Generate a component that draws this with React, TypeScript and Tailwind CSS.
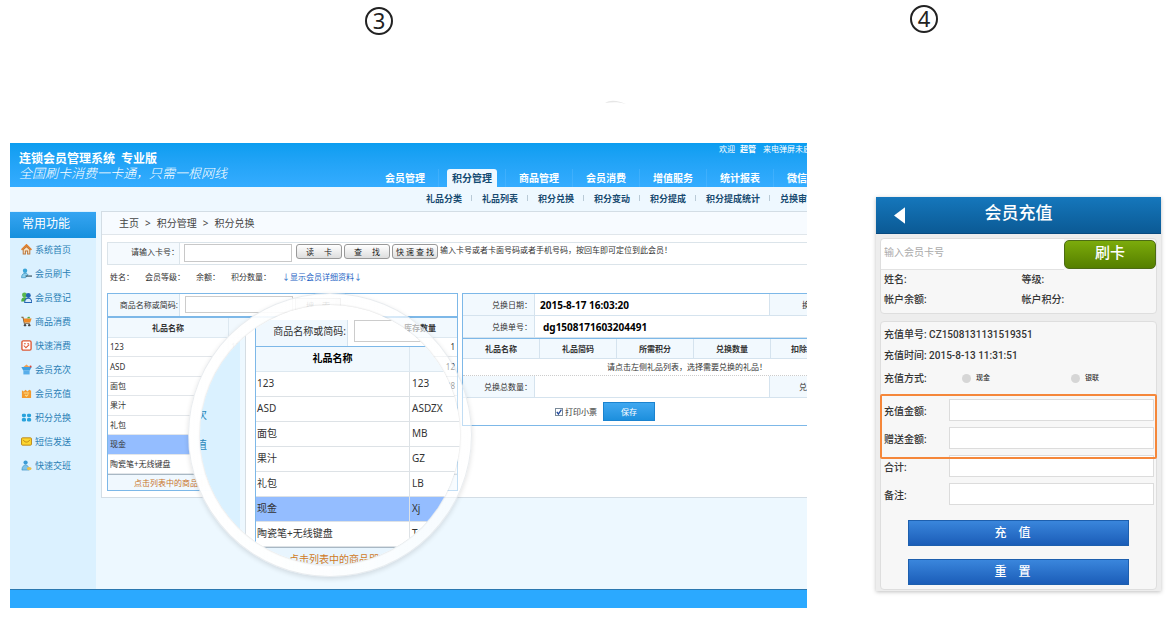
import React from "react";

type SideItem = { label: string; icon: React.ReactNode };

const Svg = ({ children }: { children: React.ReactNode }) => (
  <svg viewBox="0 0 12 12" className="h-[11px] w-[11px] shrink-0" aria-hidden="true">
    {children}
  </svg>
);

const sideItems: SideItem[] = [
  {
    label: "系统首页",
    icon: (
      <Svg>
        <path d="M2.4 6.2 6 2.8l3.6 3.4V11H7.2V7.6H4.8V11H2.4z" fill="#fbe3c0" stroke="#b9773f" strokeWidth="1.1" />
        <path d="M0.6 6.4 6 1l5.4 5.4" fill="none" stroke="#e07f2c" strokeWidth="1.8" />
      </Svg>
    ),
  },
  {
    label: "会员刷卡",
    icon: (
      <Svg>
        <circle cx="4.4" cy="3" r="2.4" fill="#3aa5d8" />
        <path d="M0.6 10.6c0-3.6 2-4.8 4-4.8 1.6 0 2.4.6 3 1.6L5 10.6z" fill="#8ed0ee" stroke="#2b86b8" strokeWidth="0.7" />
        <path d="M5 8.8h7" stroke="#37525f" strokeWidth="1.3" />
      </Svg>
    ),
  },
  {
    label: "会员登记",
    icon: (
      <Svg>
        <circle cx="3.8" cy="3.2" r="2.7" fill="#59b84e" />
        <path d="M0.2 10.4c0-3.2 1.4-4.6 3.8-4.6S7 7 7 10.4z" fill="#4fae45" />
        <circle cx="8" cy="3.8" r="2.7" fill="#2465b5" />
        <path d="M4 11.4c0-3 1.6-4.6 4-4.6s3.8 1.6 3.8 4.6z" fill="#d7ebfb" stroke="#2465b5" strokeWidth="1.1" />
      </Svg>
    ),
  },
  {
    label: "商品消费",
    icon: (
      <Svg>
        <path d="M0.4 1.4h1.8l1.4 6.4h6" fill="none" stroke="#7a5a34" strokeWidth="1.1" />
        <path d="M2.6 2.6h9L10 7H3.6z" fill="#f08a24" />
        <path d="M6 2.4 8.8.6l1.4 1.8z" fill="#4aa53a" />
        <circle cx="4.4" cy="10" r="1.3" fill="#444" />
        <circle cx="9" cy="10" r="1.3" fill="#444" />
      </Svg>
    ),
  },
  {
    label: "快速消费",
    icon: (
      <Svg>
        <rect x="1" y="1" width="10" height="10" rx="1.4" fill="#fff" stroke="#de5a36" strokeWidth="1.5" />
        <path d="M3.2 4h2M6.8 4h2M3 6l2.4 2.4L9 5" fill="none" stroke="#de5a36" strokeWidth="1.1" />
      </Svg>
    ),
  },
  {
    label: "会员充次",
    icon: (
      <Svg>
        <path d="M2.6 3.2 6 .6l3.4 2.6z" fill="#f0a050" />
        <path d="M.4 3.4h11.2L9.6 7H2.4z" fill="#3f9fe0" />
        <path d="M2.6 7h6.8v4.4H2.6z" fill="#58aeea" />
        <circle cx="10.4" cy="2.8" r="1.2" fill="#d9483b" />
      </Svg>
    ),
  },
  {
    label: "会员充值",
    icon: (
      <Svg>
        <path d="M1 2.4 3 3.8 5 2l2 1.8L9 2l2 1v8H1z" fill="#f29a2e" />
        <path d="M3 5.4h6M4.4 7.6 6 9l2-2" fill="none" stroke="#fbe08c" strokeWidth="1.1" />
      </Svg>
    ),
  },
  {
    label: "积分兑换",
    icon: (
      <Svg>
        <rect x="1" y="1.8" width="4.4" height="3.8" rx="1.4" fill="#29a3dc" />
        <rect x="6.6" y="1.8" width="4.4" height="3.8" rx="1.4" fill="#29a3dc" />
        <rect x="1" y="6.6" width="4.4" height="3.8" rx="1.4" fill="#29a3dc" />
        <rect x="6.6" y="6.6" width="4.4" height="3.8" rx="1.4" fill="#29a3dc" />
      </Svg>
    ),
  },
  {
    label: "短信发送",
    icon: (
      <Svg>
        <rect x="0.6" y="2" width="10.8" height="8" rx="1" fill="#fcd630" stroke="#b98212" strokeWidth="1" />
        <path d="M2.4 4.2C4 7.4 8 7.4 9.6 4.2" fill="none" stroke="#b98212" strokeWidth="1" />
      </Svg>
    ),
  },
  {
    label: "快速交班",
    icon: (
      <Svg>
        <circle cx="5" cy="2.8" r="2.3" fill="#3a9bd6" />
        <path d="M1 11c0-3.8 1.6-5.4 4-5.4S8.8 7.2 8.8 11z" fill="#7fc4ea" stroke="#2b86b8" strokeWidth="0.6" />
        <ellipse cx="9" cy="9.4" rx="2.6" ry="1.8" fill="#ecc04a" />
      </Svg>
    ),
  },
];

const navItems = ["会员管理", "积分管理", "商品管理", "会员消费", "增值服务", "统计报表"];
const subItems = ["礼品分类", "礼品列表", "积分兑换", "积分变动", "积分提成", "积分提成统计", "兑换审"];

const gifts = [
  { name: "123", code: "123", stock: "1" },
  { name: "ASD", code: "ASDZX", stock: "12" },
  { name: "面包", code: "MB", stock: "98" },
  { name: "果汁", code: "GZ", stock: "1" },
  { name: "礼包", code: "LB", stock: "" },
  { name: "现金", code: "Xj", stock: "" },
  { name: "陶瓷笔+无线键盘", code: "T", stock: "" },
];

function StepNumber({ n }: { n: string }) {
  return (
    <div className="flex h-7 w-7 items-center justify-center rounded-full border-2 border-[#222] pb-[3px] text-[22px] leading-none text-[#222]">
      {n}
    </div>
  );
}

function GreyButton({ children }: { children: React.ReactNode }) {
  return (
    <button className="h-[15px] w-[46px] rounded-[3px] border border-[#999] bg-linear-to-b from-white to-[#dedede] text-[8px] leading-none whitespace-pre text-[#222]">
      {children}
    </button>
  );
}

function GiftTable() {
  return (
    <div className="w-[351px] shrink-0 border border-[#7db8e8]">
      <div className="flex h-[22px] items-stretch">
        <label htmlFor="giftSearch" className="flex w-[72px] items-center justify-end border-r border-[#d5e3ee] bg-[#f2f9fe] pr-px">
          商品名称或简码:
        </label>
        <input id="giftSearch" className="mt-[2px] ml-[5px] h-[17px] w-[108px] border border-[#ccc] bg-white px-1" />
        <button className="mt-1 ml-[2px] h-[15px] w-[46px] border border-[#bbb] bg-[#f4f4f4] whitespace-pre">搜　索</button>
      </div>
      <table className="h-[158px] w-full table-fixed border-separate border-spacing-0 border-t-2 border-[#7db8e8]">
        <thead>
          <tr className="h-5 bg-[#f2f9fe]">
            <th className="w-[121px] border-r border-b border-[#dde8f0] p-0">礼品名称</th>
            <th className="w-[102px] border-r border-b border-[#dde8f0] p-0">礼品简码</th>
            <th className="w-[52px] border-b border-[#dde8f0] p-0">积分</th>
            <th className="border-b border-[#dde8f0] p-0">库存数量</th>
          </tr>
        </thead>
        <tbody>
          {gifts.map((g) => (
            <tr key={g.name} className={g.name === "现金" ? "h-[19px] bg-[#94bdff]" : "h-[19px] bg-white"}>
              <td className="border-r border-b border-[#e2e6ea] p-0 pl-[2px]">{g.name}</td>
              <td className="border-r border-b border-[#e2e6ea] p-0 pl-[2px]">{g.code}</td>
              <td className="border-b border-[#e2e6ea] p-0" />
              <td className="border-b border-[#e2e6ea] p-0 pr-[2px] text-right">{g.stock}</td>
            </tr>
          ))}
        </tbody>
      </table>
      <div className="flex h-4 items-center border-t border-[#a9b8c4] bg-[#f0f8fe] pl-[26px] text-[#c8742a]">
        点击列表中的商品即可
      </div>
    </div>
  );
}

function ExchangeForm() {
  const label = "border-r border-b border-[#d5e3ee] bg-[#f2f9fe] p-0 pr-[2px] text-right";
  return (
    <div className="w-[400px] shrink-0 border border-[#7db8e8]">
      <table className="w-full table-fixed border-separate border-spacing-0">
        <tbody>
          <tr className="h-[22px]">
            <td className={`${label} w-[72px]`}>兑换日期：</td>
            <td className="w-[235px] border-r border-b border-[#d5e3ee] p-0 pl-[5px] text-[10px] font-bold text-black">2015-8-17 16:03:20</td>
            <td className="border-b border-[#d5e3ee] bg-[#f2f9fe] p-0 pl-8">换</td>
          </tr>
          <tr className="h-[22px]">
            <td className={label}>兑换单号：</td>
            <td className="border-b border-[#d5e3ee] p-0 pl-2 text-[10px] font-bold text-black" colSpan={2}>
              dg1508171603204491
            </td>
          </tr>
        </tbody>
      </table>
      <table className="w-full table-fixed border-separate border-spacing-0 border-t border-[#7db8e8]">
        <thead>
          <tr className="h-5 bg-[#f2f9fe]">
            {["礼品名称", "礼品简码", "所需积分", "兑换数量"].map((h) => (
              <th key={h} className="w-[77px] border-r border-b border-[#d5e3ee] p-0">
                {h}
              </th>
            ))}
            <th className="border-b border-[#d5e3ee] p-0 pl-5 text-left">扣除</th>
          </tr>
        </thead>
        <tbody>
          <tr className="h-[17px]">
            <td colSpan={5} className="border-b border-dotted border-[#ccc] p-0 pl-[144px]">
              请点击左侧礼品列表，选择需要兑换的礼品！
            </td>
          </tr>
        </tbody>
      </table>
      <table className="w-full table-fixed border-separate border-spacing-0">
        <tbody>
          <tr className="h-[22px]">
            <td className={`${label} w-[72px]`}>兑换总数量：</td>
            <td className="w-[235px] border-r border-b border-[#d5e3ee] p-0" />
            <td className="border-b border-[#d5e3ee] bg-[#f2f9fe] p-0 pl-[29px]">兑</td>
          </tr>
        </tbody>
      </table>
      <div className="flex h-[27px] items-center pl-[92px]">
        <span className="relative flex h-2 w-2">
          <input id="printTicket" type="checkbox" defaultChecked className="peer h-2 w-2 appearance-none border border-[#7a8a99] bg-white" />
          <svg viewBox="0 0 8 8" className="pointer-events-none absolute inset-0 hidden h-2 w-2 peer-checked:block">
            <path d="M1.8 3.8 3.4 6 6.4 1.6" fill="none" stroke="#234a9c" strokeWidth="1.3" />
          </svg>
        </span>
        <label htmlFor="printTicket" className="ml-[2px] w-[38px]">
          打印小票
        </label>
        <button className="h-[19px] w-[52px] border border-[#1b83cf] bg-linear-to-b from-[#3fa8f0] to-[#1c8fdd] text-white">保存</button>
      </div>
    </div>
  );
}

function Magnifier() {
  return (
    <div
      aria-hidden="true"
      className="absolute top-[150px] left-[178px] h-[284px] w-[284px] rounded-full border border-[#dfe4e8]/70 bg-linear-to-r from-white via-white/85 to-white/50 p-[11px] shadow-[0_2px_5px_rgba(0,0,0,0.12)]"
    >
      <div className="flex h-full w-full overflow-hidden rounded-full bg-white text-[10px] leading-none text-[#333] shadow-[0_0_2px_rgba(0,0,0,0.2)]">
        <div className="flex w-10 shrink-0 flex-col gap-[19px] bg-[#daf1ff] pt-[104px] text-[11px] text-[#2a86b8]">
          <span className="flex w-[7px] justify-end overflow-hidden">次</span>
          <span className="flex w-[7px] justify-end overflow-hidden">值</span>
        </div>
        <div className="w-[6px] shrink-0 border-r border-[#d5dde3] bg-[#edf8ff]" />
        <div className="ml-[9px] w-[220px] shrink-0 pt-[15px]">
          <div className="flex h-[26px] border-l border-[#7db8e8]">
            <span className="flex w-[92px] items-center justify-end border-r border-[#d5e3ee] bg-[#f0f8fe] pr-[1px] pb-1">商品名称或简码:</span>
            <span className="ml-[6px] h-[22px] w-[120px] border border-[#ccc] bg-white" />
          </div>
          <div className="flex h-[26px] border-t border-l border-[#7db8e8] bg-[#f2f9fe] font-bold text-black">
            <span className="flex w-[154px] items-center justify-center border-r border-b border-[#dde8f0] pb-[2px]">礼品名称</span>
            <span className="flex-1 border-b border-[#dde8f0]" />
          </div>
          {gifts.map((g) => (
            <div
              key={g.name}
              className={`flex h-[25px] border-l border-[#7db8e8] ${g.name === "现金" ? "bg-[#94bdff]" : "bg-white"}`}
            >
              <span className="flex w-[154px] items-center border-r border-b border-[#dde2e6] pb-[2px] pl-px">{g.name}</span>
              <span className="flex flex-1 items-center border-b border-[#dde2e6] pb-[2px] pl-[2px]">{g.code}</span>
            </div>
          ))}
          <div className="flex h-6 items-center border-t border-[#a9b8c4] bg-[#e8f5fe] pb-[2px] pl-[34px] text-[#d07a1e]">点击列表中的商品即可</div>
        </div>
      </div>
    </div>
  );
}

function DesktopApp() {
  return (
    <div className="relative flex flex-col overflow-hidden bg-[#edf8ff] text-[8px] leading-none whitespace-nowrap text-[#333]">
      <header className="flex h-11 items-stretch bg-linear-to-b from-[#0a9df0] to-[#34acff] text-white">
        <div className="w-[362px] shrink-0 pt-[9px] pl-[9px]">
          <h1 className="flex gap-[6px] text-[12px] leading-[14px] font-bold">
            <span>连锁会员管理系统</span>
            <span>专业版</span>
          </h1>
          <p className="font-['Liberation_Serif','Noto_Sans_CJK_SC',serif] text-[13px] leading-4 font-light italic">全国刷卡消费一卡通，只需一根网线</p>
        </div>
        <div className="flex w-0 flex-1 flex-col justify-between">
          <div className="flex gap-[5px] pt-[2px] pl-[347px]">
            <span>欢迎</span>
            <b>超管</b>
            <span className="ml-[2px]">来电弹屏未启</span>
          </div>
          <nav className="flex text-[10px] font-bold">
            {navItems.map((n) => (
              <div key={n} className="flex w-[67px] shrink-0 justify-center border-r border-[#5dbcff]/40">
                <a
                  href="#"
                  className={
                    n === "积分管理"
                      ? "flex h-[18px] w-[50px] items-center justify-center rounded-t-[3px] bg-[#eef8ff] text-[#124a72]"
                      : "flex h-[18px] w-[50px] items-center justify-center"
                  }
                >
                  {n}
                </a>
              </div>
            ))}
            <a href="#" className="flex h-[18px] items-center pl-[13px]">
              微信
            </a>
          </nav>
        </div>
      </header>
      <nav className="flex h-6 items-center bg-[#eef8ff] pb-[2px] pl-[406px] text-[9px] font-bold text-[#174a70]">
        {subItems.map((s, i) => (
          <div key={s} className="flex shrink-0 items-center">
            {i > 0 && <span className="mr-[10px] h-[6px] w-px bg-[#b9cad6]" />}
            <a href="#" className="mr-[9px] first:ml-[10px]">
              {s}
            </a>
          </div>
        ))}
      </nav>
      <div className="flex min-h-[378px]">
        <aside className="w-[86px] shrink-0 bg-[#dbf1ff]">
          <h2 className="mt-px flex h-[26px] items-center bg-linear-to-b from-[#35a5f2] to-[#1590dd] pb-[2px] pl-3 text-[12px] text-white">
            常用功能
          </h2>
          <ul className="-mt-px">
            {sideItems.map((s) => (
              <li key={s.label} className="h-6">
                <a href="#" className="flex h-6 items-center gap-[3px] pl-[11px] text-[9px] text-[#2a80b5]">
                  {s.icon}
                  {s.label}
                </a>
              </li>
            ))}
          </ul>
        </aside>
        <main className="ml-[5px] w-0 flex-1">
          <div className="border border-r-0 border-[#d3dde5] bg-white pb-[6px]">
            <div className="flex h-[23px] items-center gap-[6px] border-b border-[#e0e6eb] bg-[#f7fbff] pl-[17px] text-[10px] text-[#444]">
              <a href="#">主页</a>
              <span>&gt;</span>
              <a href="#">积分管理</a>
              <span>&gt;</span>
              <span>积分兑换</span>
            </div>
            <div className="overflow-hidden pt-[7px] pl-[5px]">
              <div className="flex h-[23px] items-stretch border border-r-0 border-[#dbe4ea]">
                <label
                  htmlFor="cardNo"
                  className="flex w-[72px] shrink-0 items-center justify-end border-r border-[#dbe4ea] bg-[#f5fafe] pb-[3px]"
                >
                  请输入卡号：
                </label>
                <input id="cardNo" className="mt-px ml-1 h-[18px] w-[108px] border border-[#c8c8c8] bg-white px-1" />
                <div className="mt-px ml-1 flex gap-[2px]">
                  <GreyButton>读　 卡</GreyButton>
                  <GreyButton>查　 找</GreyButton>
                  <GreyButton>快 速 查 找</GreyButton>
                </div>
                <span className="mt-[3px] ml-[2px]">输入卡号或者卡面号码或者手机号码，按回车即可定位到此会员！</span>
              </div>
              <div className="flex h-[28px] items-center gap-[11px] pb-[5px] pl-[3px]">
                <span>姓名：</span>
                <span>会员等级：</span>
                <span>余额：</span>
                <span>积分数量：</span>
                <a href="#" className="text-[#1b5fc4]">
                  ↓显示会员详细资料↓
                </a>
              </div>
              <div className="flex items-start gap-1">
                <GiftTable />
                <ExchangeForm />
              </div>
            </div>
          </div>
        </main>
      </div>
      <footer className="h-[19px] border-t border-[#2b78b0] bg-[#2ba9ff]" />
      <Magnifier />
    </div>
  );
}

function Field({ id, label }: { id: string; label: string }) {
  return (
    <div className="flex h-7 items-center">
      <label htmlFor={id} className="w-[65px] shrink-0">
        {label}
      </label>
      <input id={id} className="mb-1 h-[22px] min-w-0 flex-1 border border-[#dcdcdc] bg-white px-1" />
    </div>
  );
}

function PhoneApp() {
  return (
    <div className="bg-[#ededed] px-1 pb-px font-['Roboto','Noto_Sans_CJK_SC',sans-serif] text-[10px] leading-none font-medium text-[#333] shadow-[0_1px_4px_rgba(0,0,0,0.25)]">
      <header className="-mx-1 grid h-[37px] grid-cols-[1fr_auto_1fr] items-center border-b border-[#084a80] bg-linear-to-b from-[#1577bc] to-[#0b5a95] text-white">
        <button aria-label="返回" className="ml-[18px] w-3">
          <svg viewBox="0 0 12 18" className="h-[17px] w-[11px]">
            <path d="M12 0v18L0 9z" fill="#fff" />
          </svg>
        </button>
        <h1 className="pb-1 text-[17px] font-medium">会员充值</h1>
      </header>
      <section className="mt-1 rounded-[4px] border border-[#dedede] bg-[#f7f7f7] pb-[3px]">
        <div className="flex h-[31px]">
          <input
            aria-label="会员卡号"
            placeholder="输入会员卡号"
            className="min-w-0 flex-1 rounded-tl-[4px] border-b border-[#e2e2e2] bg-white px-[3px] pb-1 font-normal placeholder:text-[#aaa]"
          />
          <button className="mt-px h-[29px] w-[92px] rounded-[5px] border border-[#4c6b14] bg-linear-to-b from-[#7cab0c] to-[#557f00] pb-[3px] text-[15px] text-white">
            刷卡
          </button>
        </div>
        <div className="grid grid-cols-2 gap-x-[3px] pl-[3px] leading-[20px]">
          <span>姓名:</span>
          <span>等级:</span>
          <span>帐户余额:</span>
          <span>帐户积分:</span>
        </div>
      </section>
      <section className="relative mt-[7px] rounded-[4px] border border-[#dedede] bg-[#f7f7f7] pt-[2px] pr-[2px] pb-1 pl-[3px]">
        <p className="leading-[21px]">充值单号: CZ1508131131519351</p>
        <p className="leading-[21px]">充值时间: 2015-8-13 11:31:51</p>
        <fieldset className="flex h-[25px] items-center text-[7px]">
          <legend className="float-left w-[78px] text-[10px]">充值方式:</legend>
          <label className="flex w-[109px] items-center gap-[5px]">
            <input type="radio" name="pay" className="h-[9px] w-[9px] appearance-none rounded-full bg-[#d6d6d6]" />
            现金
          </label>
          <label className="flex items-center gap-[5px]">
            <input type="radio" name="pay" className="h-[9px] w-[9px] appearance-none rounded-full bg-[#d6d6d6]" />
            银联
          </label>
        </fieldset>
        <div className="mt-[7px]">
          <Field id="amount" label="充值金额:" />
          <Field id="bonus" label="赠送金额:" />
          <Field id="total" label="合计:" />
          <Field id="remark" label="备注:" />
        </div>
        <div className="pointer-events-none absolute -inset-x-px top-[72px] h-[65px] rounded-[2px] border-2 border-[#f5873a]" />
        <div className="mt-[10px] flex flex-col gap-[13px] pr-[25px] pl-6 text-[12px] text-white">
          <button className="h-[26px] border border-[#1d5fae] bg-linear-to-b from-[#3a86dc] to-[#1b5db8] pr-3">充　值</button>
          <button className="h-[26px] border border-[#1d5fae] bg-linear-to-b from-[#3a86dc] to-[#1b5db8] pr-3">重　置</button>
        </div>
      </section>
    </div>
  );
}

export default function App() {
  return (
    <div className="flex items-start gap-[69px] bg-white pr-[7px] pl-[10px] font-['Noto_Sans','Noto_Sans_CJK_SC',sans-serif]">
      <section className="min-w-0 flex-1">
        <div className="flex h-[143px] items-start pt-[7px] pl-[355px]">
          <StepNumber n="3" />
          <svg viewBox="0 0 22 6" className="mt-[92px] ml-[212px] h-[6px] w-[22px]" aria-hidden="true">
            <path d="M0 4C6 0 14 2 21 5 14 3 8 3 0 4z" fill="#e6e6e6" />
          </svg>
        </div>
        <DesktopApp />
      </section>
      <section className="w-[285px] shrink-0">
        <div className="flex h-[197px] items-start pt-[5px] pl-[34px]">
          <StepNumber n="4" />
        </div>
        <PhoneApp />
      </section>
    </div>
  );
}
